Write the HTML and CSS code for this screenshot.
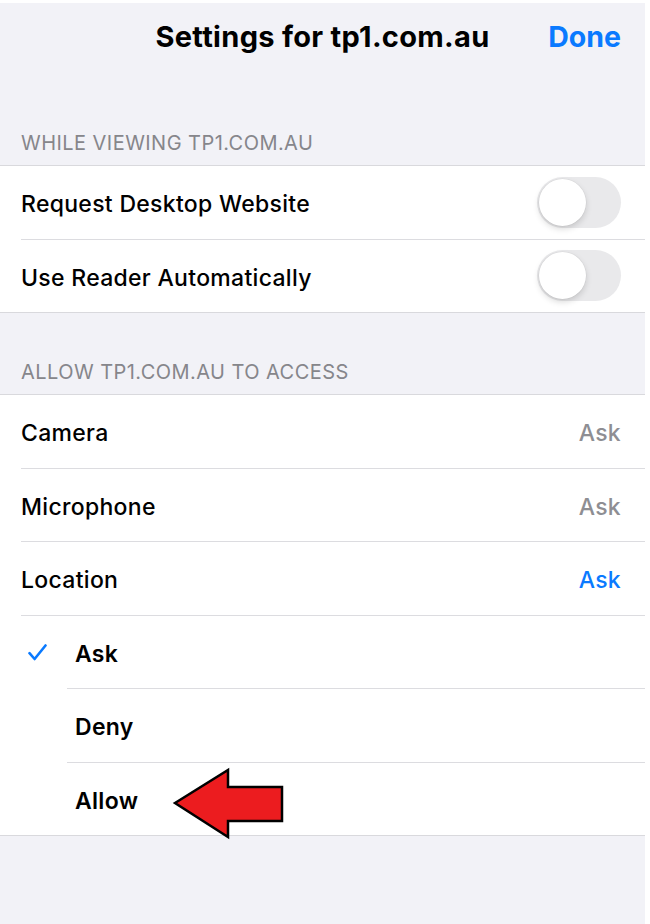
FILE: index.html
```html
<!DOCTYPE html>
<html>
<head>
<meta charset="utf-8">
<link rel="stylesheet" href="styles.css">
</head>
<body>
<div class="screen">
  <header class="nav">
    <div class="nav-title">Settings for tp1.com.au</div>
    <div class="nav-done">Done</div>
  </header>

  <div class="section-header first">WHILE VIEWING TP1.COM.AU</div>
  <div class="group">
    <div class="row"><div class="cell sep"><span class="label">Request Desktop Website</span><span class="toggle"><span class="knob"></span></span></div></div>
    <div class="row"><div class="cell"><span class="label">Use Reader Automatically</span><span class="toggle"><span class="knob"></span></span></div></div>
  </div>

  <div class="section-header second">ALLOW TP1.COM.AU TO ACCESS</div>
  <div class="group">
    <div class="row"><div class="cell sep"><span class="label">Camera</span><span class="value">Ask</span></div></div>
    <div class="row"><div class="cell sep"><span class="label">Microphone</span><span class="value">Ask</span></div></div>
    <div class="row"><div class="cell sep"><span class="label">Location</span><span class="value blue">Ask</span></div></div>
    <div class="row opt">
      <span class="check"><svg width="19" height="17" viewBox="0 0 19 17"><path d="M1.5 9.2 L6.6 15 L17.5 1.5" fill="none" stroke="#0a7aff" stroke-width="2.6" stroke-linecap="round" stroke-linejoin="round"/></svg></span>
      <div class="cell sep"><span class="label opt-label">Ask</span></div>
    </div>
    <div class="row opt">
      <span class="check"></span>
      <div class="cell sep"><span class="label opt-label">Deny</span></div>
    </div>
    <div class="row opt">
      <span class="check"></span>
      <div class="cell"><span class="label opt-label">Allow</span></div>
    </div>
    <svg class="arrow" width="120" height="80" viewBox="0 0 120 80"><polygon points="4,36 57,3 57,20 111,20 111,54 57,54 57,70" fill="#ec1c1f" stroke="#000" stroke-width="2.5" stroke-linejoin="miter"/></svg>
  </div>
</div>
</body>
</html>
```

FILE: styles.css
```css
html, body {
  margin: 0;
  padding: 0;
  background: #ffffff;
}
body {
  font-family: Inter, "Noto Sans", "Liberation Sans", sans-serif;
  -webkit-font-smoothing: antialiased;
}
.screen {
  margin-top: 3px;
  width: 645px;
  height: 921px;
  background: #f2f2f7;
  overflow: hidden;
}
.nav {
  height: 67px;
  position: relative;
  display: flex;
  align-items: center;
  justify-content: center;
}
.nav-title {
  font-size: 29px;
  font-weight: 700;
  color: #000;
  letter-spacing: 0.3px;
}
.nav-done {
  position: absolute;
  right: 24px;
  top: 0;
  height: 67px;
  display: flex;
  align-items: center;
  font-size: 28.5px;
  font-weight: 700;
  color: #0a7aff;
}
.section-header {
  padding: 0 21px 10px;
  font-size: 20px;
  line-height: 24px;
  color: #86868b;
  letter-spacing: 0.45px;
}
.section-header.first { padding-top: 61px; }
.section-header.second { padding-top: 47px; }
.group {
  position: relative;
  background: #fff;
  border-top: 1px solid #d9d9dd;
  border-bottom: 1px solid #d9d9dd;
}
.row {
  display: flex;
  padding-left: 21px;
}
.row.opt {
  padding-left: 0;
}
.check {
  width: 67px;
  flex: none;
  display: flex;
  align-items: center;
  padding-left: 28px;
  box-sizing: border-box;
}
.cell {
  flex: 1;
  height: 72.5px;
  display: flex;
  align-items: center;
  justify-content: space-between;
  padding-right: 24px;
}
.cell.sep {
  border-bottom: 1px solid #dcdce0;
}
.label,
.value {
  display: block;
  padding-top: 4px;
  font-size: 23px;
  font-weight: 500;
  letter-spacing: 0.3px;
}
.label {
  color: #000;
}
.opt-label {
  padding-left: 8px;
  font-weight: 600;
}
.value {
  color: #8e8e93;
}
.value.blue {
  color: #0a7aff;
}
.toggle {
  width: 84px;
  height: 51px;
  border-radius: 26px;
  background: #e9e9eb;
  position: relative;
  flex: none;
}
.knob {
  position: absolute;
  left: 2px;
  top: 2px;
  width: 47px;
  height: 47px;
  border-radius: 50%;
  background: #fff;
  box-shadow: 0 3px 6px rgba(0,0,0,0.15), 0 0 0 0.5px rgba(0,0,0,0.06);
}
.arrow {
  position: absolute;
  left: 171px;
  top: 372px;
}
```
